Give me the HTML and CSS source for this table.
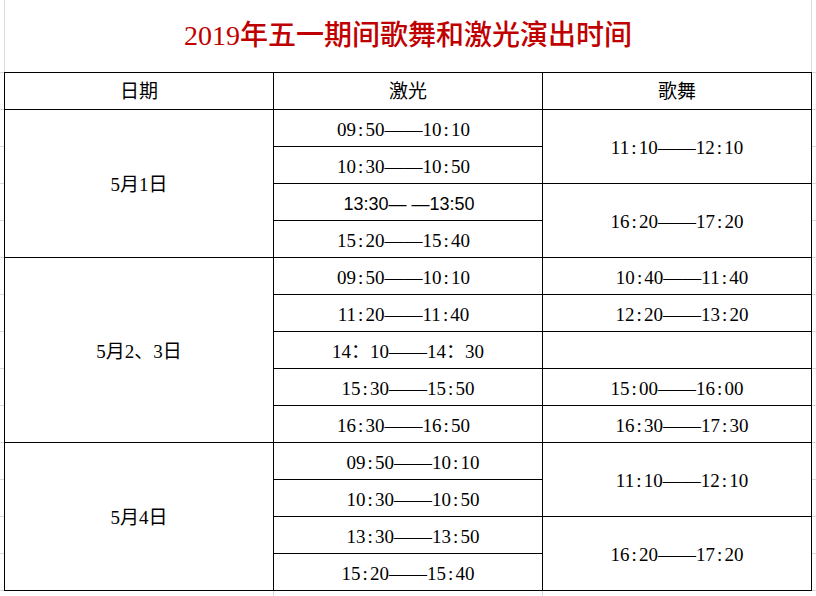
FILE: index.html
```html
<!DOCTYPE html>
<html lang="zh-CN">
<head>
<meta charset="utf-8">
<title>2019年五一期间歌舞和激光演出时间</title>
<link rel="stylesheet" href="styles.css">
</head>
<body>
<div class="title">2019年五一期间歌舞和激光演出时间</div>
<div class="sheet">
<table class="schedule">
<colgroup><col class="col"><col class="col"><col class="col"></colgroup>
<thead>
<tr><th>日期</th><th>激光</th><th>歌舞</th></tr>
</thead>
<tbody>
<tr><td rowspan="4">5月1日</td><td class="r">09<span class="co">:</span>50——10<span class="co">:</span>10</td><td rowspan="2">11<span class="co">:</span>10——12<span class="co">:</span>10</td></tr>
<tr><td class="r">10<span class="co">:</span>30——10<span class="co">:</span>50</td></tr>
<tr><td class="sans">13:30— —13:50</td><td rowspan="2">16<span class="co">:</span>20——17<span class="co">:</span>20</td></tr>
<tr><td class="r">15<span class="co">:</span>20——15<span class="co">:</span>40</td></tr>

<tr><td rowspan="5">5月2、3日</td><td class="r">09<span class="co">:</span>50——10<span class="co">:</span>10</td><td class="l">10<span class="co">:</span>40——11<span class="co">:</span>40</td></tr>
<tr><td class="r">11<span class="co">:</span>20——11<span class="co">:</span>40</td><td class="l">12<span class="co">:</span>20——13<span class="co">:</span>20</td></tr>
<tr><td>14：10——14：30</td><td></td></tr>
<tr><td>15<span class="co">:</span>30——15<span class="co">:</span>50</td><td>15<span class="co">:</span>00——16<span class="co">:</span>00</td></tr>
<tr><td class="r">16<span class="co">:</span>30——16<span class="co">:</span>50</td><td class="l">16<span class="co">:</span>30——17<span class="co">:</span>30</td></tr>

<tr><td rowspan="4">5月4日</td><td class="l">09<span class="co">:</span>50——10<span class="co">:</span>10</td><td rowspan="2" class="l">11<span class="co">:</span>10——12<span class="co">:</span>10</td></tr>
<tr><td class="l">10<span class="co">:</span>30——10<span class="co">:</span>50</td></tr>
<tr><td class="l">13<span class="co">:</span>30——13<span class="co">:</span>50</td><td rowspan="2">16<span class="co">:</span>20——17<span class="co">:</span>20</td></tr>
<tr><td>15<span class="co">:</span>20——15<span class="co">:</span>40</td></tr>
</tbody>
</table>
</div>
</body>
</html>
```

FILE: styles.css
```css
html, body {
  margin: 0;
  padding: 0;
  background: #ffffff;
}

body {
  font-family: "Liberation Serif", "Noto Sans CJK SC", serif;
  color: #000000;
}

.title {
  box-sizing: border-box;
  height: 72px;
  margin: 0 4px;
  border-left: 1px solid #d4d9e2;
  border-right: 1px solid #d4d9e2;
  display: flex;
  align-items: center;
  justify-content: center;
  padding-bottom: 1px;
  color: #c00000;
  font-size: 28px;
  font-weight: 500;
  line-height: 30px;
  background: #ffffff;
}

.sheet {
  padding: 0 4px 8px 4px;
  background:
    linear-gradient(to right, transparent 273px, #d4d9e2 273px 274px, transparent 274px 542px, #d4d9e2 542px 543px, transparent 543px),
    repeating-linear-gradient(to bottom, #d4d9e2 0 1px, transparent 1px 37px);
}

.schedule {
  width: 808px;
  table-layout: fixed;
  border-collapse: collapse;
  background: #ffffff;
  font-size: 19px;
  line-height: 20px;
}

.schedule .col {
  width: 33.333%;
}

.schedule th,
.schedule td {
  border: 1px solid #000000;
  height: 36px;
  padding: 2px 0 0 0;
  box-sizing: border-box;
  text-align: center;
  vertical-align: middle;
  font-weight: normal;
  white-space: nowrap;
}

.schedule td {
  padding-top: 3px;
}

.schedule tr {
  height: 37px;
}

.co {
  display: inline-block;
  width: 0.5em;
  text-align: center;
}

.schedule td.l {
  padding-left: 10px;
}

.schedule td.r {
  padding-right: 9px;
}

.schedule td.sans {
  font-family: "Liberation Sans", "Noto Sans CJK SC", sans-serif;
  font-size: 18px;
  padding-left: 2px;
}
```
